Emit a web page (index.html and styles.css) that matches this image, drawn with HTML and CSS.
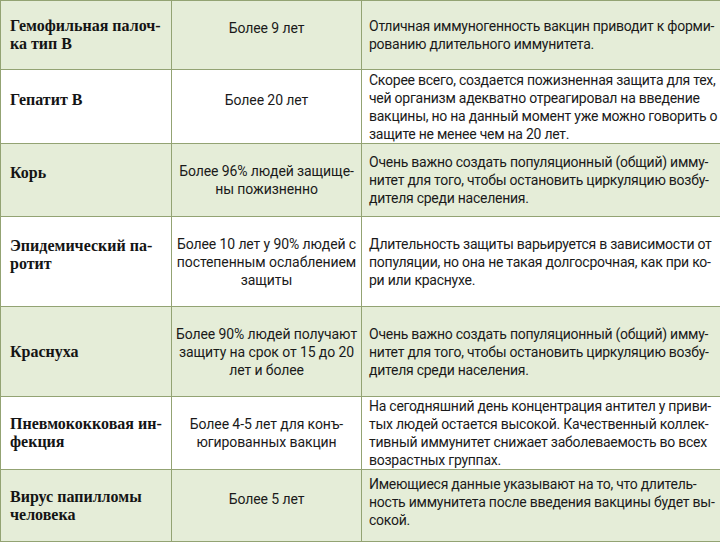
FILE: index.html
```html
<!DOCTYPE html>
<html lang="ru">
<head>
<meta charset="utf-8">
<link rel="stylesheet" href="styles.css">
</head>
<body>
<table class="vac">
  <colgroup>
    <col class="c1"><col class="c2"><col class="c3">
  </colgroup>
  <tr class="band r1">
    <td class="name">Гемофильная палоч-<br>ка тип B</td>
    <td class="term up">Более 9 лет</td>
    <td class="note">Отличная иммуногенность вакцин приводит к форми-<br>рованию длительного иммунитета.</td>
  </tr>
  <tr class="r2">
    <td class="name up">Гепатит B</td>
    <td class="term up">Более 20 лет</td>
    <td class="note">Скорее всего, создается пожизненная защита для тех,<br>чей организм адекватно отреагировал на введение<br>вакцины, но на данный момент уже можно говорить о<br>защите не менее чем на 20 лет.</td>
  </tr>
  <tr class="band r3">
    <td class="name up">Корь</td>
    <td class="term">Более 96% людей защище-<br>ны пожизненно</td>
    <td class="note">Очень важно создать популяционный (общий) имму-<br>нитет для того, чтобы остановить циркуляцию возбу-<br>дителя среди населения.</td>
  </tr>
  <tr class="r4">
    <td class="name up">Эпидемический па-<br>ротит</td>
    <td class="term">Более 10 лет у 90% людей с<br>постепенным ослаблением<br>защиты</td>
    <td class="note">Длительность защиты варьируется в зависимости от<br>популяции, но она не такая долгосрочная, как при ко-<br>ри или краснухе.</td>
  </tr>
  <tr class="band r5">
    <td class="name">Краснуха</td>
    <td class="term">Более 90% людей получают<br>защиту на срок от 15 до 20<br>лет и более</td>
    <td class="note">Очень важно создать популяционный (общий) имму-<br>нитет для того, чтобы остановить циркуляцию возбу-<br>дителя среди населения.</td>
  </tr>
  <tr class="r6">
    <td class="name">Пневмококковая ин-<br>фекция</td>
    <td class="term">Более 4-5 лет для конъ-<br>югированных вакцин</td>
    <td class="note">На сегодняшний день концентрация антител у приви-<br>тых людей остается высокой. Качественный коллек-<br>тивный иммунитет снижает заболеваемость во всех<br>возрастных группах.</td>
  </tr>
  <tr class="band r7">
    <td class="name">Вирус папилломы<br>человека</td>
    <td class="term up">Более 5 лет</td>
    <td class="note up-s">Имеющиеся данные указывают на то, что длитель-<br>ность иммунитета после введения вакцины будет вы-<br>сокой.</td>
  </tr>
</table>
</body>
</html>
```

FILE: styles.css
```css
html, body {
  margin: 0;
  padding: 0;
  background: #ffffff;
}

.vac {
  border-collapse: collapse;
  table-layout: fixed;
  width: 720px;
  font-family: Roboto, "Liberation Sans", sans-serif;
  font-size: 14px;
  color: #1a1a1a;
}

.c1 { width: 171px; }
.c2 { width: 190px; }
.c3 { width: 359px; }

.vac td {
  border: 1px solid #93a373;
  vertical-align: middle;
  line-height: 18px;
  white-space: nowrap;
  overflow: hidden;
  padding: 0;
}

.band td {
  background: #e5edd8;
}

.r1 { height: 69px; }
.r2 { height: 74px; }
.r3 { height: 73px; }
.r4 { height: 90px; }
.r5 { height: 90px; }
.r6 { height: 72px; }
.r7 { height: 72px; }

.name {
  font-family: "Liberation Serif", serif;
  font-weight: bold;
  font-size: 16px;
  padding-left: 9px !important;
  color: #141414;
}

.term {
  text-align: center;
  letter-spacing: -0.1px;
}

.note {
  padding-left: 7px !important;
  letter-spacing: -0.25px;
}

.up {
  padding-bottom: 14px !important;
}

.up-s {
  padding-bottom: 7px !important;
}
```
